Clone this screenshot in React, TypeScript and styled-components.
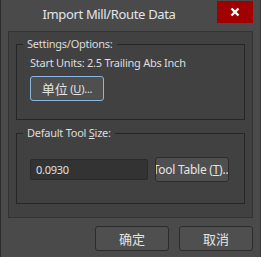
import styled, { createGlobalStyle } from 'styled-components';

const GlobalStyle = createGlobalStyle`
  html, body {
    margin: 0;
    padding: 0;
    background: #4a4a4a;
  }
  * {
    box-sizing: border-box;
  }
`;

const FONT = `"Noto Sans", "Noto Sans CJK SC", sans-serif`;

// Window frame
const Window = styled.div`
  width: 261px;
  height: 257px;
  background: #4a4a4a;
  border-left: 1px solid #2b2b2b;
  border-right: 1px solid #3a3a3a;
  display: flex;
  flex-direction: column;
  font-family: ${FONT};
  font-size: 11px;
  letter-spacing: -0.25px;
  color: #dedede;
`;

const TitleBar = styled.div`
  height: 31px;
  display: flex;
  align-items: flex-start;
`;

const Title = styled.div`
  flex: 1;
  text-align: center;
  font-size: 13px;
  letter-spacing: -0.35px;
  line-height: 18px;
  padding-top: 5px;
  color: #e2e6ea;
`;

const CloseButton = styled.div`
  width: 36px;
  height: 22px;
  margin-top: 1px;
  margin-right: 7px;
  background: #a00000;
  display: flex;
  align-items: center;
  justify-content: center;
`;

const Panel = styled.div`
  margin: 0 7px 0 7px;
  height: 187px;
  background: #414141;
  border: 1px solid #333333;
  padding: 6px 7px 0 7px;
  display: flex;
  flex-direction: column;
  gap: 7px;
`;

const Group = styled.fieldset<{ $height: number }>`
  margin: 0;
  height: ${(p) => p.$height}px;
  border: 1px solid #262626;
  padding: 0;
  min-width: 0;
`;

const Legend = styled.legend`
  margin-left: 6px;
  padding: 0 4px;
  line-height: 12px;
  height: 12px;
  color: #dcdcdc;
`;

const GroupBody = styled.div<{ $top: number }>`
  padding: ${(p) => p.$top}px 0 0 13px;
  display: flex;
  flex-direction: column;
  align-items: flex-start;
  gap: 5px;
`;

const InfoText = styled.div`
  line-height: 16px;
  white-space: nowrap;
`;

const Button = styled.div<{ $focused?: boolean; $size?: number }>`
  flex: none;
  width: 74px;
  height: 25px;
  background: #4f4f4f;
  border: 1px solid ${(p) => (p.$focused ? '#8cb6de' : '#2c2c2c')};
  border-radius: 3px;
  display: flex;
  align-items: center;
  justify-content: center;
  white-space: nowrap;
  overflow: hidden;
  font-size: ${(p) => p.$size ?? 11}px;
  color: #e4e4e4;
`;

const Cjk = styled.span`
  font-size: 13px;
  letter-spacing: 0;
`;

const Key = styled.span`
  text-decoration: underline;
`;

const Row = styled.div`
  display: flex;
  align-items: center;
  gap: 7px;
`;

const Input = styled.div`
  width: 118px;
  height: 21px;
  background: #333333;
  border: 1px solid #2a2a2a;
  border-radius: 2px;
  padding-left: 5px;
  display: flex;
  align-items: center;
  color: #e0e0e0;
`;

const Footer = styled.div`
  display: flex;
  justify-content: flex-end;
  gap: 10px;
  padding: 8px 7px 0 0;
`;

export default function App() {
  return (
    <>
      <GlobalStyle />
      <Window>
        <TitleBar>
          <Title>Import Mill/Route Data</Title>
          <CloseButton>
            <svg width="10" height="10" viewBox="0 0 10 10">
              <path d="M1.5 1.5 L8.5 8.5 M8.5 1.5 L1.5 8.5" stroke="#fff" strokeWidth="2.4" />
            </svg>
          </CloseButton>
        </TitleBar>
        <Panel>
          <Group $height={82}>
            <Legend>Settings/Options:</Legend>
            <GroupBody $top={5}>
              <InfoText>Start Units: 2.5 Trailing Abs Inch</InfoText>
              <Button $focused>
                <Cjk>单位</Cjk>&nbsp;(<Key>U</Key>)...
              </Button>
            </GroupBody>
          </Group>
          <Group $height={77}>
            <Legend>
              Default Tool <Key>S</Key>ize:
            </Legend>
            <GroupBody $top={18}>
              <Row>
                <Input>0.0930</Input>
                <Button $size={12}>
                  Tool Table (<Key>T</Key>)...
                </Button>
              </Row>
            </GroupBody>
          </Group>
        </Panel>
        <Footer>
          <Button>
            <Cjk>确定</Cjk>
          </Button>
          <Button>
            <Cjk>取消</Cjk>
          </Button>
        </Footer>
      </Window>
    </>
  );
}
